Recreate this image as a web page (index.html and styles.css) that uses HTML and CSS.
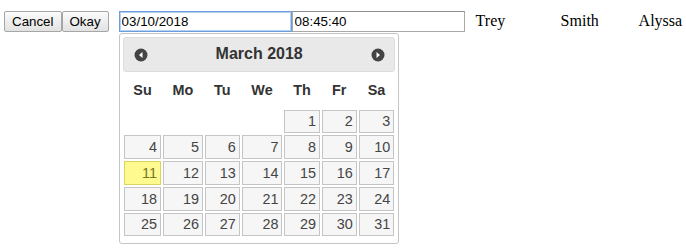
FILE: index.html
```html
<!DOCTYPE html>
<html>
<head>
<meta charset="utf-8">
<link rel="stylesheet" href="styles.css">
</head>
<body>
<div class="bar">
  <button class="btn">Cancel</button><button class="btn">Okay</button>
  <input class="field focused date-field" type="text" value="03/10/2018">
  <input class="field" type="text" value="08:45:40">
  <span class="name trey">Trey</span><span class="name smith">Smith</span><span class="name">Alyssa</span>
</div>
<div class="dp">
  <div class="dp-header">
    <span class="dp-nav dp-prev"><svg width="16" height="16" viewBox="0 0 16 16"><circle cx="8" cy="8" r="6.5" fill="#444"/><polygon points="9.5,5 6,8 9.5,11" fill="#fff"/></svg></span>
    <div class="dp-title">March 2018</div>
    <span class="dp-nav dp-next"><svg width="16" height="16" viewBox="0 0 16 16"><circle cx="8" cy="8" r="6.5" fill="#444"/><polygon points="6.5,5 10,8 6.5,11" fill="#fff"/></svg></span>
  </div>
  <table class="dp-cal">
    <thead>
      <tr><th>Su</th><th>Mo</th><th>Tu</th><th>We</th><th>Th</th><th>Fr</th><th>Sa</th></tr>
    </thead>
    <tbody>
      <tr><td>&#160;</td><td>&#160;</td><td>&#160;</td><td>&#160;</td><td><span class="day">1</span></td><td><span class="day">2</span></td><td><span class="day">3</span></td></tr>
      <tr><td><span class="day">4</span></td><td><span class="day">5</span></td><td><span class="day">6</span></td><td><span class="day">7</span></td><td><span class="day">8</span></td><td><span class="day">9</span></td><td><span class="day">10</span></td></tr>
      <tr><td><span class="day today">11</span></td><td><span class="day">12</span></td><td><span class="day">13</span></td><td><span class="day">14</span></td><td><span class="day">15</span></td><td><span class="day">16</span></td><td><span class="day">17</span></td></tr>
      <tr><td><span class="day">18</span></td><td><span class="day">19</span></td><td><span class="day">20</span></td><td><span class="day">21</span></td><td><span class="day">22</span></td><td><span class="day">23</span></td><td><span class="day">24</span></td></tr>
      <tr><td><span class="day">25</span></td><td><span class="day">26</span></td><td><span class="day">27</span></td><td><span class="day">28</span></td><td><span class="day">29</span></td><td><span class="day">30</span></td><td><span class="day">31</span></td></tr>
    </tbody>
  </table>
</div>
</body>
</html>
```

FILE: styles.css
```css
body {
  margin: 0;
  font-family: "Liberation Serif", "Times New Roman", serif;
  font-size: 16px;
  color: #000;
}
.bar {
  display: flex;
  align-items: baseline;
  padding: 11px 0 0 4px;
}
.btn {
  font: 13.333px "Liberation Sans", Arial, sans-serif;
  height: 21px;
  box-sizing: border-box;
  margin: 0;
  padding: 1px 7px;
  border: 1px solid #a6a6a6;
  border-radius: 2px;
  background: linear-gradient(#fbfbfb, #e2e2e2);
  color: #000;
}
.field {
  width: 173px;
  height: 21px;
  box-sizing: border-box;
  margin: 0;
  padding: 1px 2px;
  font: 13.333px "Liberation Sans", Arial, sans-serif;
  color: #000;
  border: 1px solid #a9a9a9;
  border-top-color: #8f8f8f;
  background: #fff;
}
.date-field { margin-left: 10px; }
.field.focused {
  border-color: #6a9de0;
  outline: none;
  box-shadow: inset 0 0 0 1px #b9d1f1;
}
.name { display: inline-block; }
.trey { margin-left: 11px; width: 85px; }
.smith { width: 78px; }

.dp {
  width: 17em;
  margin: 1px 0 0 119px;
  padding: .2em .2em 0;
  border: 1px solid #c5c5c5;
  border-radius: 3px;
  background: #fff;
  color: #333;
  font-family: "Liberation Sans", Arial, Helvetica, sans-serif;
  font-size: 16px;
}
.dp-header {
  display: flex;
  align-items: center;
  padding: 2.2px 2px;
  border: 1px solid #ddd;
  border-radius: 3px;
  background: #e9e9e9;
  color: #333;
  font-weight: bold;
}
.dp-nav {
  width: 1.8em;
  height: 1.8em;
  display: flex;
  align-items: center;
  justify-content: center;
  flex: none;
}
.dp-nav svg { display: block; }
.dp-title {
  flex: 1;
  margin: 0 .5em;
  line-height: 1.8em;
  text-align: center;
}
.dp-cal {
  width: 100%;
  font-size: .9em;
  border-collapse: collapse;
  margin: 0 0 .4em;
}
.dp-cal th {
  padding: .7em .3em;
  text-align: center;
  font-weight: bold;
  border: 0;
}
.dp-cal td {
  border: 0;
  padding: 1px;
}
.day {
  display: block;
  padding: .2em;
  text-align: right;
  border: 1px solid #c5c5c5;
  background: #f6f6f6;
  color: #454545;
}
.day.today {
  border-color: #dad55e;
  background: #fffa90;
  color: #777620;
}
```
